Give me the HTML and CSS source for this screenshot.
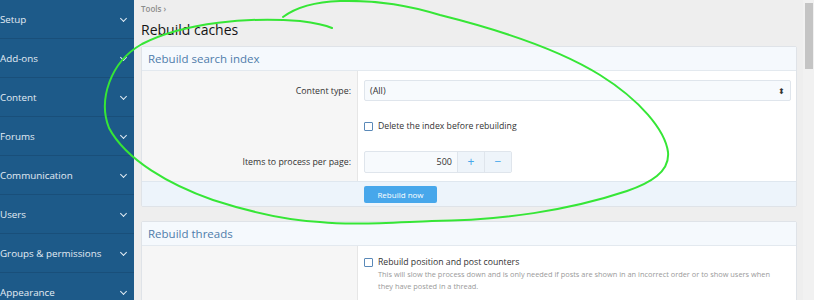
FILE: index.html
```html
<!DOCTYPE html>
<html lang="en">
<head>
    <meta charset="UTF-8">
    <title>Rebuild caches</title>
    <link rel="stylesheet" href="styles.css">
</head>
<body>

<div class="admin">
    <nav class="sidebar">
        <ul>
            <li>Setup <span class="chevron"></span></li>
            <li>Add-ons <span class="chevron"></span></li>
            <li>Content <span class="chevron"></span></li>
            <li>Forums <span class="chevron"></span></li>
            <li>Communication <span class="chevron"></span></li>
            <li>Users <span class="chevron"></span></li>
            <li>Groups &amp; permissions <span class="chevron"></span></li>
            <li>Appearance <span class="chevron"></span></li>
        </ul>
    </nav>

    <main class="content">
        <div class="breadcrumb">Tools &rsaquo;</div>
        <h1>Rebuild caches</h1>

        <section class="block">
            <h2 class="block-header">Rebuild search index</h2>
            <div class="form-row row-tall">
                <div class="form-label">Content type:</div>
                <div class="form-field">
                    <div class="select">(All) <span class="select-arrows"></span></div>
                </div>
            </div>
            <div class="form-row row-short">
                <div class="form-label"></div>
                <div class="form-field">
                    <label class="check"><span class="box"></span>Delete the index before rebuilding</label>
                </div>
            </div>
            <div class="form-row row-tall">
                <div class="form-label">Items to process per page:</div>
                <div class="form-field">
                    <div class="number">
                        <span class="number-value">500</span>
                        <span class="number-btn">+</span>
                        <span class="number-btn">&minus;</span>
                    </div>
                </div>
            </div>
            <div class="block-footer">
                <button class="button">Rebuild now</button>
            </div>
        </section>

        <section class="block">
            <h2 class="block-header">Rebuild threads</h2>
            <div class="form-row">
                <div class="form-label"></div>
                <div class="form-field field-check">
                    <label class="check"><span class="box"></span>Rebuild position and post counters</label>
                    <p class="hint">This will slow the process down and is only needed if posts are shown in an incorrect order or to show users when they have posted in a thread.</p>
                </div>
            </div>
        </section>
    </main>

    <div class="scrollbar"><div class="scrollbar-thumb"></div></div>
</div>

<!-- pen annotation drawn over the screenshot -->
<svg class="annotation" width="814" height="300" viewBox="0 0 814 300">
    <path d="M283,17 C295,8 312,2 340,1 C380,0 410,6 440,15 C500,30 560,50 600,75 C640,100 665,130 668,152 C670,172 650,183 627,191 C570,210 500,221 432,221 C380,223 350,225 320,222 C285,220 250,212 213,200 C170,185 126,160 109,128 C98,100 110,62 142,44 C185,22 250,17 300,21 C315,23 325,25 332,28" fill="none" stroke="#36e636" stroke-width="2" stroke-linecap="round"/>
</svg>

</body>
</html>
```

FILE: styles.css
```css
body {
    margin: 0;
    font-family: 'Open Sans', 'Noto Sans', sans-serif;
    color: #141414;
    background-color: #eeeeee;
}

.admin {
    display: flex;
    height: 300px;
    overflow: hidden;
}

/* sidebar */
.sidebar {
    flex: none;
    width: 134px;
    background-color: #1d5a89;
}

.sidebar ul {
    list-style: none;
    margin: 0;
    padding: 0;
}

.sidebar li {
    display: flex;
    justify-content: space-between;
    align-items: center;
    height: 38px;
    padding-right: 8px;
    border-bottom: 1px solid #194f7a;
    color: #e3ecf4;
    font-size: 9.8px;
}

.chevron {
    width: 4px;
    height: 4px;
    margin-top: -2px;
    border-right: 1.6px solid #e3ecf4;
    border-bottom: 1.6px solid #e3ecf4;
    transform: rotate(45deg);
}

/* main */
.content {
    flex: 1;
    padding: 3px 6px 0 7px;
    overflow: hidden;
}

.breadcrumb {
    font-size: 8px;
    font-weight: 600;
    line-height: 12px;
    color: #8c8c8c;
}

h1 {
    margin: 4px 0 5px;
    font-size: 14px;
    font-weight: 400;
    line-height: 22px;
}

.block {
    background-color: #fff;
    border: 1px solid #dfe3e8;
    border-radius: 2px;
    margin-bottom: 14px;
}

.block-header {
    margin: 0;
    height: 23px;
    padding-left: 6px;
    line-height: 23px;
    font-size: 11.5px;
    font-weight: 400;
    color: #4f7cab;
    background-color: #f5f9fd;
    border-bottom: 1px solid #e3e9ef;
}

.form-row {
    display: grid;
    grid-template-columns: 216px 1fr;
}

.row-tall {
    height: 39px;
}

.row-short {
    height: 32px;
}

.form-label {
    display: flex;
    align-items: center;
    justify-content: flex-end;
    padding-right: 6px;
    font-size: 8.8px;
    color: #333;
    background-color: #f6f6f6;
    border-right: 1px solid #e6e6e6;
}

.form-field {
    display: flex;
    align-items: center;
    padding: 0 5px 0 6px;
}

.select {
    flex: 1;
    display: flex;
    justify-content: space-between;
    align-items: center;
    height: 19px;
    padding: 0 5px;
    font-size: 9px;
    color: #333;
    background-color: #f7fafd;
    border: 1px solid #dfe5ec;
    border-radius: 2px;
}

.select-arrows::before {
    content: "\2B0D";
    font-family: 'DejaVu Sans', sans-serif;
    font-size: 8px;
    color: #333;
}

.check {
    display: flex;
    align-items: center;
    font-size: 8.7px;
    line-height: 12px;
    color: #333;
}

.box {
    width: 7px;
    height: 7px;
    margin: 0 5px 0 0;
    border: 1px solid #5a89b8;
    border-radius: 1px;
    background-color: #fff;
}

.number {
    display: flex;
    height: 20px;
    width: 146px;
    border: 1px solid #dfe5ec;
    border-radius: 2px;
    background-color: #f7fafd;
    font-size: 9px;
}

.number-value {
    flex: 1;
    text-align: right;
    padding-right: 5px;
    line-height: 20px;
    color: #333;
}

.number-btn {
    width: 26px;
    text-align: center;
    line-height: 20px;
    font-size: 12px;
    color: #47a7eb;
    background-color: #eef4fa;
    border-left: 1px solid #dfe5ec;
}

.block-footer {
    height: 24px;
    display: flex;
    align-items: center;
    padding-left: 222px;
    background-color: #edf4fb;
    border-top: 1px solid #dfe7ef;
}

.button {
    width: 73px;
    height: 17px;
    padding: 0;
    border: none;
    border-radius: 2px;
    background-color: #47a7eb;
    color: #fff;
    font-family: inherit;
    font-size: 8px;
}

.field-check {
    flex-direction: column;
    align-items: flex-start;
    padding-top: 10px;
    padding-bottom: 10px;
}

.hint {
    max-width: 404px;
    margin: 0 0 0 14px;
    font-size: 7.4px;
    line-height: 12px;
    color: #9a9a9a;
}

/* fake scrollbar */
.scrollbar {
    flex: none;
    width: 11px;
    background-color: #f1f1f1;
}

.scrollbar-thumb {
    width: 8px;
    height: 66px;
    margin: 3px 0 0 2px;
    background-color: #c4c4c4;
}

.annotation {
    position: absolute;
    top: 0;
    left: 0;
    pointer-events: none;
}
```
